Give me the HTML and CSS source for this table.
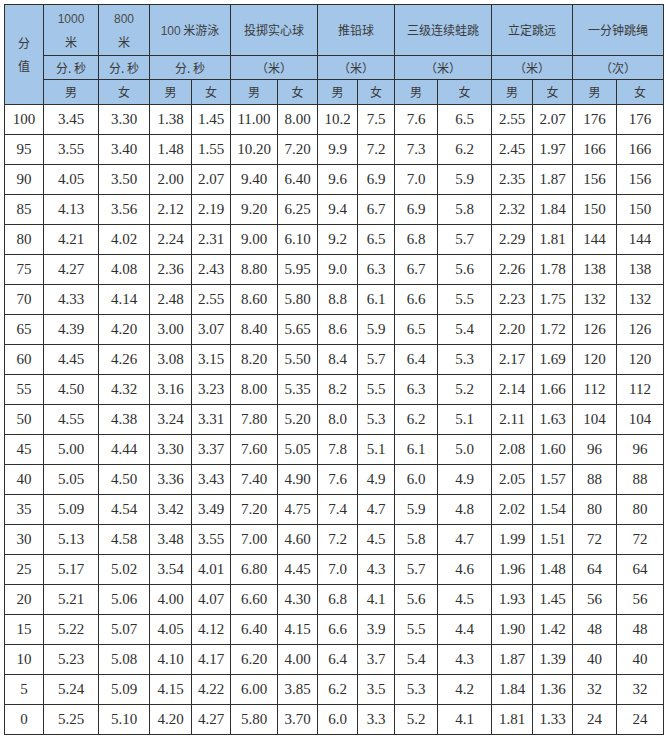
FILE: index.html
```html
<!DOCTYPE html>
<html lang="zh-CN">
<head>
<meta charset="utf-8">
<title>体育评分表</title>
<link rel="stylesheet" href="styles.css">
</head>
<body>
<table class="score">
<colgroup>
<col class="c1"><col class="c2"><col class="c3"><col class="c4"><col class="c5"><col class="c6"><col class="c7"><col class="c8"><col class="c9"><col class="c10"><col class="c11"><col class="c12"><col class="c13"><col class="c14"><col class="c15">
</colgroup>
<thead>
<tr class="h1">
<th rowspan="3" class="fz"><span>分</span><span>值</span></th>
<th class="two"><span class="num">1000</span><span>米</span></th>
<th class="two"><span class="num">800</span><span>米</span></th>
<th colspan="2"><span class="num">100</span> 米游泳</th>
<th colspan="2">投掷实心球</th>
<th colspan="2">推铅球</th>
<th colspan="2">三级连续蛙跳</th>
<th colspan="2">立定跳远</th>
<th colspan="2">一分钟跳绳</th>
</tr>
<tr class="h2">
<th>分. 秒</th>
<th>分. 秒</th>
<th colspan="2">分. 秒</th>
<th colspan="2">（米）</th>
<th colspan="2">（米）</th>
<th colspan="2">（米）</th>
<th colspan="2">（米）</th>
<th colspan="2">（次）</th>
</tr>
<tr class="h3">
<th>男</th><th>女</th><th>男</th><th>女</th><th>男</th><th>女</th><th>男</th><th>女</th><th>男</th><th>女</th><th>男</th><th>女</th><th>男</th><th>女</th>
</tr>
</thead>
<tbody>
<tr><td>100</td><td>3.45</td><td>3.30</td><td>1.38</td><td>1.45</td><td>11.00</td><td>8.00</td><td>10.2</td><td>7.5</td><td>7.6</td><td>6.5</td><td>2.55</td><td>2.07</td><td>176</td><td>176</td></tr>
<tr><td>95</td><td>3.55</td><td>3.40</td><td>1.48</td><td>1.55</td><td>10.20</td><td>7.20</td><td>9.9</td><td>7.2</td><td>7.3</td><td>6.2</td><td>2.45</td><td>1.97</td><td>166</td><td>166</td></tr>
<tr><td>90</td><td>4.05</td><td>3.50</td><td>2.00</td><td>2.07</td><td>9.40</td><td>6.40</td><td>9.6</td><td>6.9</td><td>7.0</td><td>5.9</td><td>2.35</td><td>1.87</td><td>156</td><td>156</td></tr>
<tr><td>85</td><td>4.13</td><td>3.56</td><td>2.12</td><td>2.19</td><td>9.20</td><td>6.25</td><td>9.4</td><td>6.7</td><td>6.9</td><td>5.8</td><td>2.32</td><td>1.84</td><td>150</td><td>150</td></tr>
<tr><td>80</td><td>4.21</td><td>4.02</td><td>2.24</td><td>2.31</td><td>9.00</td><td>6.10</td><td>9.2</td><td>6.5</td><td>6.8</td><td>5.7</td><td>2.29</td><td>1.81</td><td>144</td><td>144</td></tr>
<tr><td>75</td><td>4.27</td><td>4.08</td><td>2.36</td><td>2.43</td><td>8.80</td><td>5.95</td><td>9.0</td><td>6.3</td><td>6.7</td><td>5.6</td><td>2.26</td><td>1.78</td><td>138</td><td>138</td></tr>
<tr><td>70</td><td>4.33</td><td>4.14</td><td>2.48</td><td>2.55</td><td>8.60</td><td>5.80</td><td>8.8</td><td>6.1</td><td>6.6</td><td>5.5</td><td>2.23</td><td>1.75</td><td>132</td><td>132</td></tr>
<tr><td>65</td><td>4.39</td><td>4.20</td><td>3.00</td><td>3.07</td><td>8.40</td><td>5.65</td><td>8.6</td><td>5.9</td><td>6.5</td><td>5.4</td><td>2.20</td><td>1.72</td><td>126</td><td>126</td></tr>
<tr><td>60</td><td>4.45</td><td>4.26</td><td>3.08</td><td>3.15</td><td>8.20</td><td>5.50</td><td>8.4</td><td>5.7</td><td>6.4</td><td>5.3</td><td>2.17</td><td>1.69</td><td>120</td><td>120</td></tr>
<tr><td>55</td><td>4.50</td><td>4.32</td><td>3.16</td><td>3.23</td><td>8.00</td><td>5.35</td><td>8.2</td><td>5.5</td><td>6.3</td><td>5.2</td><td>2.14</td><td>1.66</td><td>112</td><td>112</td></tr>
<tr><td>50</td><td>4.55</td><td>4.38</td><td>3.24</td><td>3.31</td><td>7.80</td><td>5.20</td><td>8.0</td><td>5.3</td><td>6.2</td><td>5.1</td><td>2.11</td><td>1.63</td><td>104</td><td>104</td></tr>
<tr><td>45</td><td>5.00</td><td>4.44</td><td>3.30</td><td>3.37</td><td>7.60</td><td>5.05</td><td>7.8</td><td>5.1</td><td>6.1</td><td>5.0</td><td>2.08</td><td>1.60</td><td>96</td><td>96</td></tr>
<tr><td>40</td><td>5.05</td><td>4.50</td><td>3.36</td><td>3.43</td><td>7.40</td><td>4.90</td><td>7.6</td><td>4.9</td><td>6.0</td><td>4.9</td><td>2.05</td><td>1.57</td><td>88</td><td>88</td></tr>
<tr><td>35</td><td>5.09</td><td>4.54</td><td>3.42</td><td>3.49</td><td>7.20</td><td>4.75</td><td>7.4</td><td>4.7</td><td>5.9</td><td>4.8</td><td>2.02</td><td>1.54</td><td>80</td><td>80</td></tr>
<tr><td>30</td><td>5.13</td><td>4.58</td><td>3.48</td><td>3.55</td><td>7.00</td><td>4.60</td><td>7.2</td><td>4.5</td><td>5.8</td><td>4.7</td><td>1.99</td><td>1.51</td><td>72</td><td>72</td></tr>
<tr><td>25</td><td>5.17</td><td>5.02</td><td>3.54</td><td>4.01</td><td>6.80</td><td>4.45</td><td>7.0</td><td>4.3</td><td>5.7</td><td>4.6</td><td>1.96</td><td>1.48</td><td>64</td><td>64</td></tr>
<tr><td>20</td><td>5.21</td><td>5.06</td><td>4.00</td><td>4.07</td><td>6.60</td><td>4.30</td><td>6.8</td><td>4.1</td><td>5.6</td><td>4.5</td><td>1.93</td><td>1.45</td><td>56</td><td>56</td></tr>
<tr><td>15</td><td>5.22</td><td>5.07</td><td>4.05</td><td>4.12</td><td>6.40</td><td>4.15</td><td>6.6</td><td>3.9</td><td>5.5</td><td>4.4</td><td>1.90</td><td>1.42</td><td>48</td><td>48</td></tr>
<tr><td>10</td><td>5.23</td><td>5.08</td><td>4.10</td><td>4.17</td><td>6.20</td><td>4.00</td><td>6.4</td><td>3.7</td><td>5.4</td><td>4.3</td><td>1.87</td><td>1.39</td><td>40</td><td>40</td></tr>
<tr><td>5</td><td>5.24</td><td>5.09</td><td>4.15</td><td>4.22</td><td>6.00</td><td>3.85</td><td>6.2</td><td>3.5</td><td>5.3</td><td>4.2</td><td>1.84</td><td>1.36</td><td>32</td><td>32</td></tr>
<tr><td>0</td><td>5.25</td><td>5.10</td><td>4.20</td><td>4.27</td><td>5.80</td><td>3.70</td><td>6.0</td><td>3.3</td><td>5.2</td><td>4.1</td><td>1.81</td><td>1.33</td><td>24</td><td>24</td></tr>
</tbody>
</table>
</body>
</html>
```
FILE: styles.css
```css
html, body {
  margin: 0;
  padding: 0;
  background: #ffffff;
}
body {
  padding: 4px 0 0 4px;
}
.score {
  border-collapse: collapse;
  table-layout: fixed;
  width: 659px;
  color: #333333;
}
.c1 { width: 39px; }
.c2 { width: 55px; }
.c3 { width: 51px; }
.c4 { width: 42px; }
.c5 { width: 39px; }
.c6 { width: 47px; }
.c7 { width: 40px; }
.c8 { width: 40px; }
.c9 { width: 37px; }
.c10 { width: 43px; }
.c11 { width: 54px; }
.c12 { width: 41px; }
.c13 { width: 40px; }
.c14 { width: 44px; }
.c15 { width: 47px; }

.score th,
.score td {
  border: 1px solid #2f2f2f;
  padding: 0;
  text-align: center;
  vertical-align: middle;
  overflow: hidden;
  white-space: nowrap;
}
.score th {
  background: #a4c7e9;
  font-family: "Noto Sans CJK SC", "Noto Sans", sans-serif;
  font-weight: normal;
  font-size: 12px;
  color: #3a3a3a;
  line-height: 16px;
}
.score .num {
  font-family: "Liberation Sans", Arial, sans-serif;
  font-size: 12px;
  color: #4a4a4a;
}
.h1 th { height: 50px; }
.h2 th { height: 23px; }
.h3 th { height: 24px; }
.two span,
.fz span {
  display: block;
}
.two span + span { margin-top: 7px; }
.fz span + span { margin-top: 7px; }

.score td {
  height: 29px;
  font-family: "Liberation Serif", "Times New Roman", serif;
  font-size: 15px;
  color: #2e2e2e;
}
```
